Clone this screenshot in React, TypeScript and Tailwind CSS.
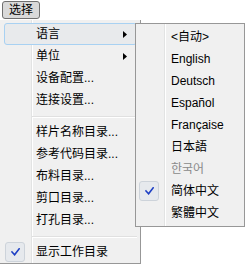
import React from "react";

const FONT = "font-['Liberation_Sans','Noto_Sans_CJK_SC',sans-serif]";

function Check() {
  return (
    <svg width="9" height="8" viewBox="0 0 9 8" className="block">
      <path d="M1 4 L3.6 6.8 L8.2 0.8" fill="none" stroke="#1c3ec4" strokeWidth="1.6" strokeLinecap="square" />
    </svg>
  );
}

function Arrow() {
  return (
    <svg width="4" height="7" viewBox="0 0 4 7" className="block">
      <path d="M0 0 L4 3.5 L0 7 Z" fill="#000" />
    </svg>
  );
}

function CheckBox() {
  return (
    <div className="w-[20px] h-[20px] rounded-[3px] border border-[#cdd3da] bg-[#e6e9ed] flex items-center justify-center">
      <Check />
    </div>
  );
}

type MainItem =
  | { t: string; sep?: false; arrow?: boolean; hl?: boolean; checked?: boolean }
  | { sep: true };

const mainItems: MainItem[] = [
  { t: "语言", arrow: true, hl: true },
  { t: "单位", arrow: true },
  { t: "设备配置..." },
  { t: "连接设置..." },
  { sep: true },
  { t: "样片名称目录..." },
  { t: "参考代码目录..." },
  { t: "布料目录..." },
  { t: "剪口目录..." },
  { t: "打孔目录..." },
  { sep: true },
  { t: "显示工作目录", checked: true },
];

const subItems: { t: string; checked?: boolean; faint?: boolean }[] = [
  { t: "<自动>" },
  { t: "English" },
  { t: "Deutsch" },
  { t: "Español" },
  { t: "Française" },
  { t: "日本語" },
  { t: "한국어", faint: true },
  { t: "简体中文", checked: true },
  { t: "繁體中文" },
];

export default function App() {
  return (
    <div className={`relative w-[246px] h-[265px] bg-white overflow-hidden text-[12px] text-black ${FONT}`}>
      <div className="h-[20px] pt-[1px] pl-[2px]">
        <div className="w-[38px] h-[18px] rounded-[3px] border border-[#707070] bg-[#d9d9d9] flex items-center justify-center leading-none">
          选择
        </div>
      </div>

      <div className="w-[141px] flex flex-col bg-[#f0f0f0] bg-[linear-gradient(to_right,transparent_31px,#e2e3e3_31px,#e2e3e3_32px,#ffffff_32px,#ffffff_33px,transparent_33px)] border-r border-b border-[#979797] pt-[3px]">
        {mainItems.map((it, i) =>
          it.sep ? (
            <div key={i} className="h-[10px] pt-[5px] pl-[32px] pr-[3px]">
              <div className="h-px bg-[#e0e0e0] shadow-[0_1px_0_#ffffff]" />
            </div>
          ) : it.hl ? (
            <div
              key={i}
              className="h-[22px] ml-[4px] mr-[3px] flex items-center rounded-[3px] border border-[#a8d1f2] bg-[#e8eaec]"
            >
              <div className="w-[31px] shrink-0" />
              <span className="leading-none">{it.t}</span>
              <div className="ml-auto mr-[9px]">
                <Arrow />
              </div>
            </div>
          ) : (
            <div key={i} className="h-[22px] flex items-center">
              <div className="w-[36px] shrink-0 pl-[5px] flex items-center">{it.checked && <CheckBox />}</div>
              <span className="leading-none">{it.t}</span>
              {it.arrow && (
                <div className="ml-auto mr-[13px]">
                  <Arrow />
                </div>
              )}
            </div>
          )
        )}
      </div>

      <div className="absolute left-[135px] top-[23px] w-[110px] flex flex-col bg-[#f0f0f0] bg-[linear-gradient(to_right,transparent_28px,#e2e3e3_28px,#e2e3e3_29px,#ffffff_29px,#ffffff_30px,transparent_30px)] border border-[#979797] py-[2px]">
        {subItems.map((it, i) => (
          <div key={i} className="h-[22px] flex items-center">
            <div className="w-[35px] shrink-0 pl-[3px] flex items-center">{it.checked && <CheckBox />}</div>
            <span className={`leading-none ${it.faint ? "text-[#8a8a8a]" : ""}`}>{it.t}</span>
          </div>
        ))}
      </div>
    </div>
  );
}
